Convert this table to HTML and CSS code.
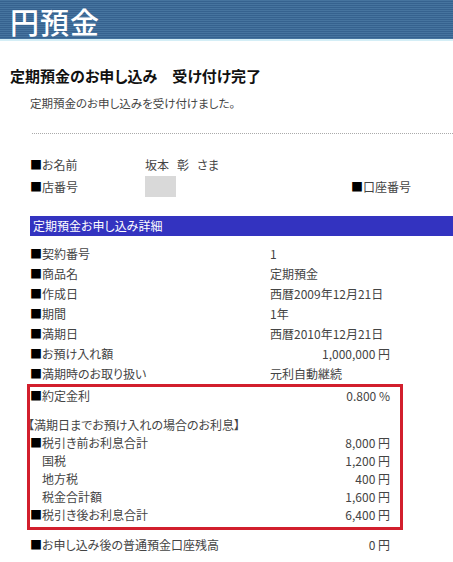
FILE: index.html
```html
<html>
<head>
<title>円預金</title>
<link rel="stylesheet" href="styles.css">
</head>
<body>
<div class="header">
<div class="header-title">円預金</div>
</div>
<div class="content">
<h2 class="page-title">定期預金のお申し込み　受け付け完了</h2>
<p class="lead">定期預金のお申し込みを受け付けました。</p>
<div class="dots"></div>

<div class="customer">
<div class="customer-row">
<span class="customer-label"><b class="sq">■</b>お名前</span>
<span class="customer-value"><span class="name-part">坂本</span><span class="name-part">彰</span><span class="name-part">さま</span></span>
</div>
<div class="customer-row">
<span class="customer-label"><b class="sq">■</b>店番号</span>
<span class="customer-value"><span class="masked"></span></span>
<span class="account-label"><b class="sq">■</b>口座番号</span>
</div>
</div>

<div class="section-bar">定期預金お申し込み詳細</div>

<div class="details">
<div class="row"><span><b class="sq">■</b>契約番号</span><span>1</span></div>
<div class="row"><span><b class="sq">■</b>商品名</span><span>定期預金</span></div>
<div class="row"><span><b class="sq">■</b>作成日</span><span>西暦2009年12月21日</span></div>
<div class="row"><span><b class="sq">■</b>期間</span><span>1年</span></div>
<div class="row"><span><b class="sq">■</b>満期日</span><span>西暦2010年12月21日</span></div>
<div class="row"><span><b class="sq">■</b>お預け入れ額</span><span class="num">1,000,000 円</span></div>
<div class="row"><span><b class="sq">■</b>満期時のお取り扱い</span><span>元利自動継続</span></div>
</div>

<div class="interest">
<div class="row tight"><span><b class="sq">■</b>約定金利</span><span class="num">0.800 %</span></div>
<div class="note">【満期日までお預け入れの場合のお利息】</div>
<div class="row tight"><span><b class="sq">■</b>税引き前お利息合計</span><span class="num">8,000 円</span></div>
<div class="row tight"><span class="sub">国税</span><span class="num">1,200 円</span></div>
<div class="row tight"><span class="sub">地方税</span><span class="num">400 円</span></div>
<div class="row tight"><span class="sub">税金合計額</span><span class="num">1,600 円</span></div>
<div class="row tight"><span><b class="sq">■</b>税引き後お利息合計</span><span class="num">6,400 円</span></div>
</div>

<div class="details after">
<div class="row tight"><span><b class="sq">■</b>お申し込み後の普通預金口座残高</span><span class="num">0 円</span></div>
</div>
</div>
</body>
</html>
```

FILE: styles.css
```css
body {
margin: 0;
font-family: "Noto Sans CJK JP", "Noto Sans", sans-serif;
font-size: 12px;
color: #444;
background-color: #fff;
font-feature-settings: "palt";
}
.header {
height: 41px;
box-sizing: border-box;
padding: 6px 0 0 10px;
background-color: #3e6c9c;
background-image: repeating-linear-gradient(to bottom, #46749f 0px, #46749f 1px, #36628f 1px, #36628f 2px);
border-bottom: 2px solid #d4eef6;
}
.header-title {
color: #fff;
font-size: 29px;
line-height: 31px;
letter-spacing: 1px;
font-weight: 500;
}
.page-title {
margin: 25px 0 0 10px;
font-size: 15px;
line-height: 20px;
font-weight: bold;
color: #111;
}
.lead {
margin: 8px 0 0 30px;
font-size: 11.5px;
line-height: 18px;
}
.dots {
margin: 21px 0 0 32px;
border-top: 1px dotted #aaa;
}
.customer {
margin: 22px 0 0 30px;
}
.customer-row {
display: flex;
align-items: center;
min-height: 18px;
line-height: 18px;
}
.customer-row + .customer-row {
margin-top: 2px;
}
.customer-label {
width: 115px;
}
.customer-value {
width: 206px;
}
.name-part {
margin-right: 8px;
}
.masked {
display: block;
width: 31px;
height: 21px;
background-color: #d9d9d9;
}
.sq {
color: #000;
font-weight: normal;
}
.section-bar {
margin: 19px 0 0 30px;
height: 20px;
line-height: 20px;
padding-left: 3px;
background-color: #3333c0;
color: #fff;
}
.details {
margin: 8px 0 0 30px;
width: 360px;
}
.row {
display: grid;
grid-template-columns: 240px 120px;
height: 20px;
line-height: 20px;
}
.row.tight {
height: 18px;
line-height: 18px;
}
.num {
text-align: right;
}
.sub {
padding-left: 12px;
}
.interest {
margin-left: 27px;
width: 370px;
border: 3px solid #d21f2d;
padding: 0 0 3px 0;
}
.note {
margin-top: 11px;
margin-left: -2px;
line-height: 18px;
}
.details.after {
margin-top: 6px;
}
```
